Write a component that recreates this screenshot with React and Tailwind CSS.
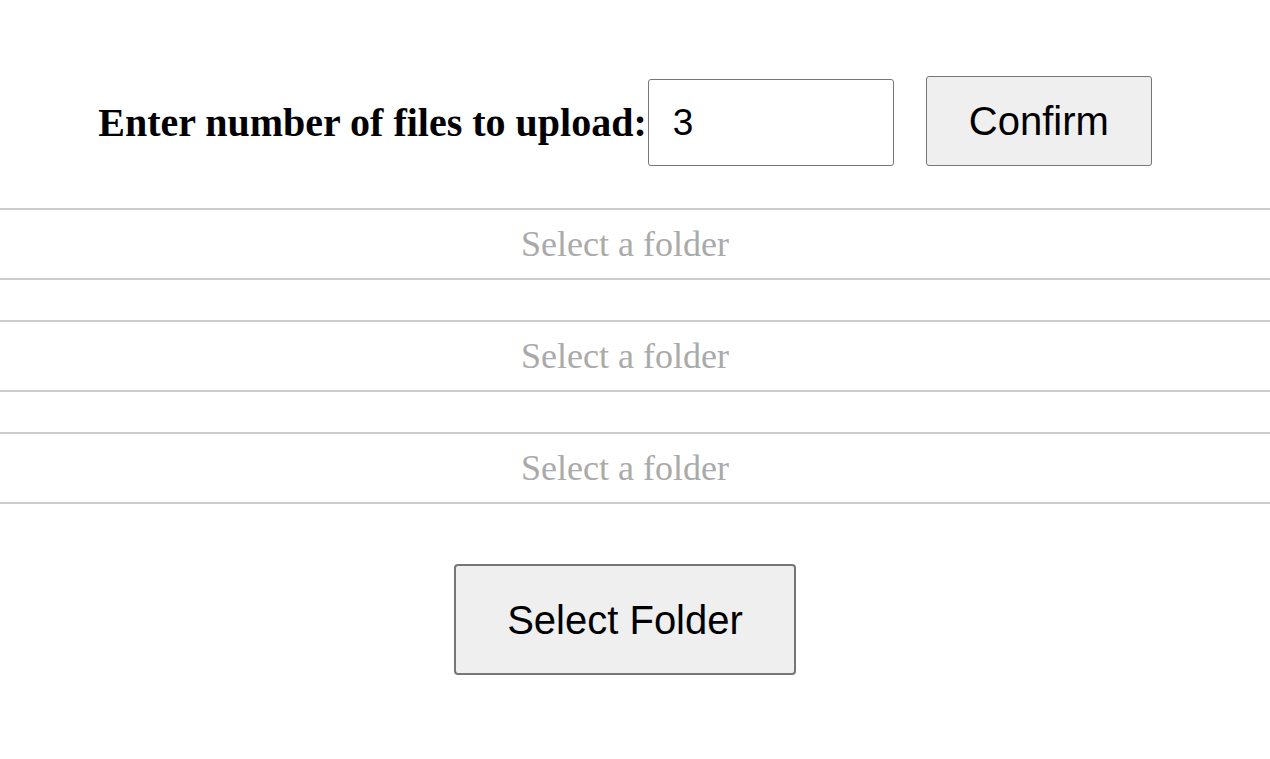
export default function App() {
  const rows = [0, 1, 2];
  return (
    <div className="w-[1270px] bg-white min-h-[759px]">
      <div className="pt-[76px] pr-[20px] flex items-center justify-center">
        <label className="mt-[4px] font-['Liberation_Serif',serif] font-bold text-[40px] text-black leading-none">
          Enter number of files to upload:
        </label>
        <input
          type="text"
          defaultValue="3"
          className="ml-[1px] mt-[3px] w-[246px] h-[87px] border border-[#767676] rounded-[3px] px-[24px] font-['Liberation_Sans',sans-serif] text-[37px] text-black outline-none"
        />
        <button className="ml-[32px] w-[226px] h-[90px] border border-[#767676] rounded-[3px] bg-[#efefef] font-['Liberation_Sans',sans-serif] text-[40px] text-black">
          Confirm
        </button>
      </div>
      <div className="mt-[42px] flex flex-col gap-[40px]">
        {rows.map((r) => (
          <div
            key={r}
            className="h-[72px] border-y-2 border-[#cccccc] flex items-center justify-center pr-[20px]"
          >
            <span className="font-['Liberation_Serif',serif] text-[36px] text-[#aaaaaa]">
              Select a folder
            </span>
          </div>
        ))}
      </div>
      <div className="mt-[60px] pr-[20px] flex justify-center">
        <button className="w-[342px] h-[111px] border-2 border-[#767676] rounded-[4px] bg-[#efefef] font-['Liberation_Sans',sans-serif] text-[40px] text-black">
          Select Folder
        </button>
      </div>
    </div>
  );
}
